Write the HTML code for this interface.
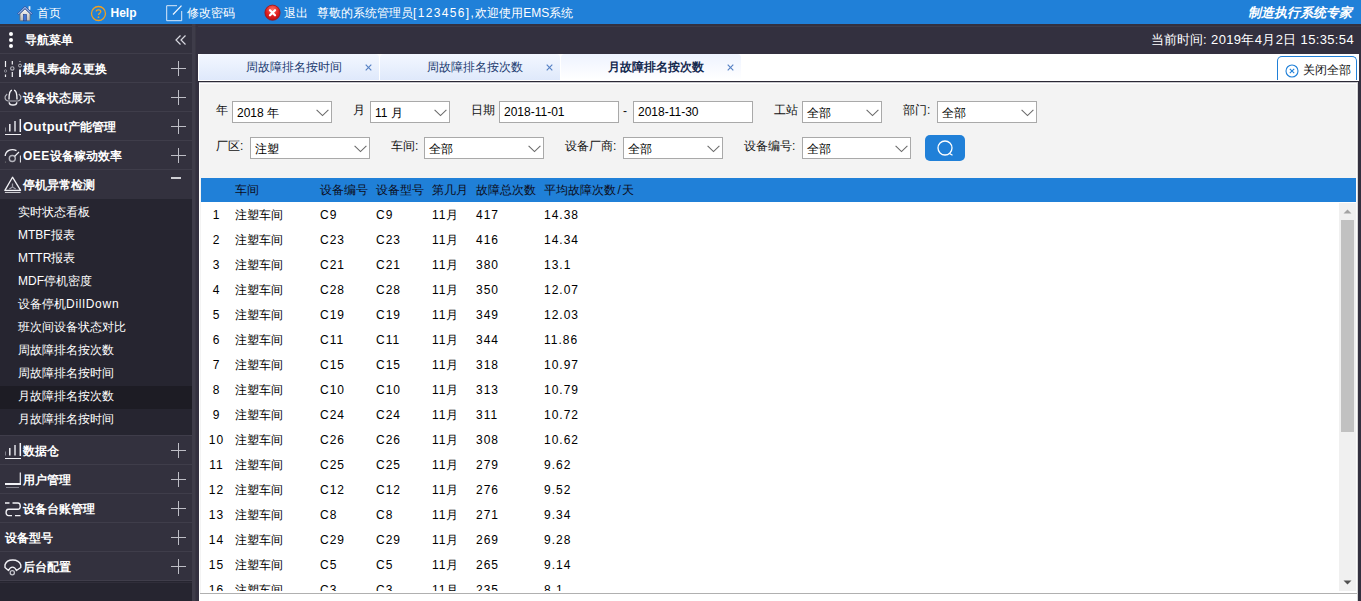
<!DOCTYPE html>
<html lang="zh"><head>
<meta charset="utf-8">
<title>EMS</title>
<style>
*{box-sizing:border-box;margin:0;padding:0}
html,body{width:1361px;height:601px;overflow:hidden;background:#33303f;font-family:"Liberation Sans",sans-serif;font-size:12px;color:#000}
.abs{position:absolute}
span,div{white-space:nowrap}
#top{position:absolute;left:0;top:0;width:1361px;height:24px;background:#2080d8;color:#fff}
#top .t{position:absolute;top:5px;line-height:16px;font-size:12px}
#bar2{position:absolute;left:198px;top:24px;width:1163px;height:30px;background:#33303f;color:#fff}
#side{position:absolute;left:0;top:24px;width:193px;height:577px;background:#262530;color:#fff;overflow:hidden}
#split{position:absolute;left:192px;top:24px;width:4px;height:577px;background:#3e3c49;border-right:1px solid #383642}
.mi{position:absolute;left:0;width:193px;height:28px;background:#33313e;font-weight:bold;font-size:12px}
.mi .lb{position:absolute;top:7px;line-height:16px}
.mi .pl{position:absolute;left:171px;top:7px;width:15px;height:15px}
.mi .pl:before{content:"";position:absolute;left:0;top:7px;width:15px;height:1px;background:#bebec6}
.mi .pl:after{content:"";position:absolute;left:7px;top:0;width:1px;height:15px;background:#bebec6}
.sep{position:absolute;left:0;width:193px;height:1px;background:#3f3d4a}
.si{position:absolute;left:0;width:193px;height:23px;font-size:12px}
.si>span{position:absolute;left:18px;top:2px;line-height:16px}
.si.on{background:#1d1c24}
#tabs{position:absolute;left:198px;top:54px;width:1161px;height:27px;background:#fff}
.tab{position:absolute;top:0;height:26px;width:180px;border-radius:4px 4px 0 0;background:linear-gradient(#f3f7ff,#dfe9fb);color:#1c3b70;font-size:12px}
.tab .tx{position:absolute;left:47px;top:5px;line-height:16px}
.tab .x{position:absolute;left:165px;top:9px;width:9px;height:9px}
.tab.on{background:linear-gradient(#eef3ff,#ffffff);font-weight:bold;color:#15294f}
#tline{position:absolute;left:198px;top:81px;width:1161px;height:1px;background:#2b2936}
#panel{position:absolute;left:200px;top:82px;width:1158px;height:519px;background:#f3f3f3;border-right:1px solid #d5d5d5}
#pl{position:absolute;left:199px;top:82px;width:1px;height:519px;background:#fff}
#pt{position:absolute;left:-1px;top:0;width:1158px;height:2px;background:#fff;border-top:1px solid #c9c9ce}
#pr{position:absolute;left:1156px;top:1px;width:1px;height:518px;background:#fcfcfc}
.lab{position:absolute;font-size:12px;line-height:16px;color:#111}
.sel{position:absolute;height:22px;border:1px solid #a9a9a9;background:#fff;font-size:12px;line-height:20px;padding-left:4px;padding-top:1px;color:#000}
.sel.inp{padding-top:0}
.sel svg{position:absolute;right:2px;top:7px}
#btn{position:absolute;left:725px;top:53px;width:40px;height:26px;border-radius:5px;background:#2080d8}
#th{position:absolute;left:1px;top:96px;width:1155px;height:24px;background:#2080d8;color:#0c0c18;font-size:12px}
#th>span{position:absolute;top:4px;line-height:16px}
#tbg{position:absolute;left:1px;top:120px;width:1155px;height:391px;background:#fff}
#tb{position:absolute;left:1px;top:120px;width:1155px;height:389px;background:#fff;overflow:hidden}
#tbot{position:absolute;left:0;top:511px;width:1157px;height:8px;background:#fff;border-top:1px solid #b0b0b0}
.tr{position:absolute;left:0;width:1138px;height:25px;font-size:12px;color:#000}
.tr span{position:absolute;top:5px;line-height:16px}
.c0{left:0;width:31px;text-align:center}
.c0,.c2,.c3,.c4,.c5,.c6{letter-spacing:1px}
.ls{letter-spacing:.45px;font-size:13px}
.c1{left:34px}.c2{left:119px}.c3{left:175px}.c4{left:231px}.c5{left:275px}.c6{left:343px}
#sb{position:absolute;left:1138px;top:1px;width:17px;height:389px;background:#f0f0f0}
#thumb{position:absolute;left:2px;top:17px;width:13px;height:212px;background:#c1c1c1}
.j{display:inline-block;text-align:justify;text-align-last:justify}
</style>
</head>
<body>
<div id="top">
  <svg class="abs" style="left:17px;top:5px" width="16" height="17" viewBox="0 0 16 17"><defs><linearGradient id="hw" x1="0" y1="0" x2="0" y2="1"><stop offset="0" stop-color="#fafafa"></stop><stop offset="1" stop-color="#b8b8b8"></stop></linearGradient></defs><rect x="11.6" y="1.2" width="1.8" height="3.6" fill="#eee"></rect><path d="M3 8.5 L8 3.8 L13 8.5 V15.8 H3 Z" fill="url(#hw)" stroke="#6e6e6e" stroke-width="0.8"></path><path d="M8 1.2 L15.4 8.6 L14.2 9.6 L8 3.6 L1.8 9.6 L0.6 8.6 Z" fill="#9fbcee" stroke="#2d4f9c" stroke-width="0.9"></path><rect x="6.5" y="9.5" width="3" height="6.3" fill="#3f74d6" stroke="#213f86" stroke-width="0.6"></rect></svg>
  <span class="t j" style="left: 37px; width: 24px;">首页</span>
  <svg class="abs" style="left:90px;top:5px" width="17" height="17" viewBox="0 0 17 17"><circle cx="8.5" cy="8.5" r="7" fill="none" stroke="#f0a020" stroke-width="1.3"></circle><path d="M6.2 6.6 C6.2 4.2 10.8 4.2 10.8 6.6 C10.8 8.2 8.5 8.2 8.5 10" fill="none" stroke="#f0a020" stroke-width="1.3"></path><circle cx="8.5" cy="12.2" r="0.9" fill="#f0a020"></circle></svg>
  <span class="t" style="left:110.5px;font-weight:bold">Help</span>
  <svg class="abs" style="left:166px;top:5px" width="17" height="17" viewBox="0 0 17 17"><path d="M11 0.7 H0.7 V15.7 H15.7 V6" fill="none" stroke="#dbe9f9" stroke-width="1"></path><path d="M7 9.5 L15.5 0.6" fill="none" stroke="#f4f8ff" stroke-width="1.2"></path></svg>
  <span class="t j" style="left: 187px; width: 48px;">修改密码</span>
  <svg class="abs" style="left:264px;top:4px" width="17" height="17" viewBox="0 0 17 17"><defs><radialGradient id="rx" cx="0.5" cy="0.3" r="0.75"><stop offset="0" stop-color="#ff7466"></stop><stop offset="0.55" stop-color="#e02020"></stop><stop offset="1" stop-color="#b00c10"></stop></radialGradient></defs><circle cx="8.5" cy="8.7" r="7.6" fill="url(#rx)" stroke="#9a1418" stroke-width="0.8"></circle><path d="M6 6.2 L11 11.2 M11 6.2 L6 11.2" stroke="#fff" stroke-width="2.3" stroke-linecap="round"></path></svg>
  <span class="t j" style="left: 284px; width: 24px;">退出</span>
  <span class="t j" style="left: 317px; width: 256.22px;">尊敬的系统管理员<span style="letter-spacing:1.35px">[123456],</span>欢迎使用EMS系统</span>
  <span class="t j" style="right: 9px; font-weight: bold; font-style: italic; font-size: 13px; width: 104px;">制造执行系统专家</span>
</div>
<div id="bar2"><i class="abs" style="left:0;top:2px;width:1163px;height:1px;background:#3d3b48"></i><span class="abs j" style="left: 953px; top: 8px; line-height: 16px; font-size: 13px; width: 55.63px;">当前时间:</span><span class="abs j" style="right: 7px; top: 8px; line-height: 16px; font-size: 13px; letter-spacing: 0.35px; width: 142.91px;">2019年4月2日 15:35:54</span></div>

<div id="side">
  <div class="sep" style="top:0;height:2px;background:#33313e"></div>
  <div class="sep" style="top:2px"></div>
  <div class="mi" style="top:3px;height:26px">
    <svg class="abs" style="left:8px;top:4px" width="6" height="18" viewBox="0 0 6 18"><circle cx="3" cy="3" r="2" fill="#fff"></circle><circle cx="3" cy="9" r="2" fill="#fff"></circle><circle cx="3" cy="15" r="2" fill="#fff"></circle></svg>
    <span class="lb j" style="left: 25px; top: 5px; width: 48px;">导航菜单</span>
    <svg class="abs" style="left:175px;top:8px" width="12" height="10" viewBox="0 0 12 10"><path d="M5.5 0.5 L1 5 L5.5 9.5 M10.5 0.5 L6 5 L10.5 9.5" fill="none" stroke="#d8d8e0" stroke-width="1.2"></path></svg>
  </div>
  <div class="sep" style="top:29px"></div>
  <div class="mi" style="top:30px">
    <svg class="abs" style="left:4px;top:7px" width="19" height="17" viewBox="0 0 19 17"><path d="M1.5 0 V6 M1.5 13.5 V16 M8.3 0 V3.5 M8.3 11 V16 M16 0 V0.8" stroke="#f2f2f6" stroke-width="1.2" fill="none"></path><path d="M16 8.5 V16" stroke="#f2f2f6" stroke-width="2" fill="none"></path><circle cx="1.5" cy="10" r="1.2" fill="none" stroke="#8c8c96" stroke-width="0.9"></circle><circle cx="8.3" cy="7.4" r="1.7" fill="none" stroke="#b4b4bc" stroke-width="1.1"></circle><circle cx="16" cy="4.6" r="1.5" fill="none" stroke="#b4b4bc" stroke-width="1"></circle></svg>
    <span class="lb j" style="left: 23px; width: 84px;">模具寿命及更换</span><i class="pl"></i></div>
  <div class="sep" style="top:58px"></div>
  <div class="mi" style="top:59px">
    <svg class="abs" style="left:4px;top:6px" width="19" height="18" viewBox="0 0 19 18"><path d="M5 10.5 C5 4 6.5 1.2 8 1.2 M13 10.5 C13 4 11.5 1.2 10 1.2" fill="none" stroke="#f2f2f6" stroke-width="1.4"></path><path d="M3.2 5 C0.2 7.5 0.2 11 4 12 H14 C17.8 11 17.8 7.5 14.8 5" fill="none" stroke="#b4b4bc" stroke-width="1.1"></path><path d="M5.2 13.2 C5.2 17 12.8 17 12.8 13.2" fill="none" stroke="#f2f2f6" stroke-width="1.4"></path></svg>
    <span class="lb j" style="left: 23px; width: 72px;">设备状态展示</span><i class="pl"></i></div>
  <div class="sep" style="top:87px"></div>
  <div class="mi" style="top:88px">
    <svg class="abs" style="left:4px;top:6px" width="19" height="18" viewBox="0 0 19 18"><path d="M1.5 9.5 V13.5" stroke="#80808a" stroke-width="1"></path><path d="M5.8 6 V13.5" stroke="#f2f2f6" stroke-width="1.5"></path><path d="M11 3 V13.5" stroke="#b4b4bc" stroke-width="2"></path><path d="M16.3 1 V14" stroke="#f2f2f6" stroke-width="1.5"></path><path d="M1 16.5 H17" stroke="#f2f2f6" stroke-width="1"></path></svg>
    <span class="lb j" style="left: 23px; width: 93.3px;"><span class="ls">Output</span>产能管理</span><i class="pl"></i></div>
  <div class="sep" style="top:116px"></div>
  <div class="mi" style="top:117px">
    <svg class="abs" style="left:4px;top:6px" width="19" height="18" viewBox="0 0 19 18"><path d="M1.2 9 C1.5 4 7 1 12.5 3.6" fill="none" stroke="#f2f2f6" stroke-width="1.3"></path><circle cx="8.3" cy="11.5" r="3" fill="none" stroke="#b4b4bc" stroke-width="1.4"></circle><path d="M10.6 9.4 L15 5" stroke="#f2f2f6" stroke-width="1.3"></path><path d="M16.4 8.5 V15.5" stroke="#f2f2f6" stroke-width="1"></path><circle cx="1.5" cy="15" r="0.6" fill="#888"></circle></svg>
    <span class="lb j" style="left: 23px; width: 98.84px;"><span style="letter-spacing:.5px">OEE</span>设备稼动效率</span><i class="pl"></i></div>
  <div class="sep" style="top:145px"></div>
  <div class="mi" style="top:146px;height:29px">
    <svg class="abs" style="left:4px;top:5px" width="19" height="19" viewBox="0 0 19 19"><path d="M8.5 2.2 L16.6 15.4 H0.9 Z" fill="none" stroke="#f2f2f6" stroke-width="1.3" stroke-linejoin="round"></path><path d="M8.5 8.5 V12 M8.5 12 L5.3 14 M8.5 12 L11.7 14" stroke="#9c9ca6" stroke-width="1.3" fill="none"></path><path d="M0.9 17.4 H16.6" stroke="#f2f2f6" stroke-width="0.9"></path></svg>
    <span class="lb j" style="left: 23px; width: 72px;">停机异常检测</span>
    <i class="abs" style="left:171px;top:7px;width:10px;height:2px;background:#cfcfd4"></i></div>
  <div class="si" style="top:178px"><span class="j" style="width: 72px;">实时状态看板</span></div>
  <div class="si" style="top:201px"><span class="j" style="width: 56.67px;">MTBF报表</span></div>
  <div class="si" style="top:224px"><span class="j" style="width: 57.33px;">MTTR报表</span></div>
  <div class="si" style="top:247px"><span class="j" style="width: 74px;">MDF停机密度</span></div>
  <div class="si" style="top:270px"><span class="j" style="width: 101.34px;">设备停机<span style="letter-spacing:.75px">DillDown</span></span></div>
  <div class="si" style="top:293px"><span class="j" style="width: 108px;">班次间设备状态对比</span></div>
  <div class="si" style="top:316px"><span class="j" style="width: 96px;">周故障排名按次数</span></div>
  <div class="si" style="top:339px"><span class="j" style="width: 96px;">周故障排名按时间</span></div>
  <div class="si on" style="top:362px"><span class="j" style="width: 96px;">月故障排名按次数</span></div>
  <div class="si" style="top:385px"><span class="j" style="width: 96px;">月故障排名按时间</span></div>
  <div class="sep" style="top:411px"></div>
  <div class="mi" style="top:412px">
    <svg class="abs" style="left:4px;top:6px" width="19" height="18" viewBox="0 0 19 18"><path d="M1.5 9.5 V13.5" stroke="#80808a" stroke-width="1"></path><path d="M5.8 6 V13.5" stroke="#f2f2f6" stroke-width="1.5"></path><path d="M11 3 V13.5" stroke="#b4b4bc" stroke-width="2"></path><path d="M16.3 1 V14" stroke="#f2f2f6" stroke-width="1.5"></path><path d="M1 16.5 H17" stroke="#f2f2f6" stroke-width="1"></path></svg>
    <span class="lb j" style="left: 23px; width: 36px;">数据仓</span><i class="pl"></i></div>
  <div class="sep" style="top:440px"></div>
  <div class="mi" style="top:441px">
    <svg class="abs" style="left:4px;top:6px" width="19" height="18" viewBox="0 0 19 18"><path d="M16.3 1.5 V13" stroke="#f2f2f6" stroke-width="1.2"></path><path d="M1 13 H17" stroke="#f2f2f6" stroke-width="2"></path><path d="M2 16.5 H15" stroke="#8c8c96" stroke-width="0.9"></path></svg>
    <span class="lb j" style="left: 23px; width: 48px;">用户管理</span><i class="pl"></i></div>
  <div class="sep" style="top:469px"></div>
  <div class="mi" style="top:470px">
    <svg class="abs" style="left:4px;top:7px" width="19" height="17" viewBox="0 0 19 17"><path d="M1 2 H5.5 M8.5 2 H14 C17 2 17 8.3 14 8.3 H4.5 C1.3 8.3 1.3 14.6 4.5 14.6 H8 M11 14.6 H16.5" fill="none" stroke="#f2f2f6" stroke-width="1.4"></path></svg>
    <span class="lb j" style="left: 23px; width: 72px;">设备台账管理</span><i class="pl"></i></div>
  <div class="sep" style="top:498px"></div>
  <div class="mi" style="top:499px">
    <span class="lb j" style="left: 5px; width: 48px;">设备型号</span><i class="pl"></i></div>
  <div class="sep" style="top:527px"></div>
  <div class="mi" style="top:528px">
    <svg class="abs" style="left:3.7px;top:6.5px" width="19" height="18" viewBox="0 0 19 18"><path d="M1 5.8 C3 -0.6 14.5 -0.6 16.8 6 V8.5 L12.5 11.5 C10.5 7 6.5 7 4.5 11.5 L1 8.5 Z" fill="none" stroke="#f2f2f6" stroke-width="1.4" stroke-linejoin="round"></path><circle cx="8.3" cy="13.8" r="2.1" fill="none" stroke="#c4c4cc" stroke-width="1.3"></circle></svg>
    <span class="lb j" style="left: 23px; width: 48px;">后台配置</span><i class="pl"></i></div>
  <div class="sep" style="top:556px"></div>
  <div class="sep" style="top:558px;background:#302e3a"></div>
</div>
<div id="split"></div>
<div id="tabs">
  <div class="tab" style="left:1px"><span class="tx j" style="width: 96px;">周故障排名按时间</span><svg class="x" viewBox="0 0 9 9"><path d="M1.7 1.7 L7.3 7.3 M7.3 1.7 L1.7 7.3" stroke="#5681c4" stroke-width="1.15"></path></svg></div>
  <div class="tab" style="left:182px"><span class="tx j" style="width: 96px;">周故障排名按次数</span><svg class="x" viewBox="0 0 9 9"><path d="M1.7 1.7 L7.3 7.3 M7.3 1.7 L1.7 7.3" stroke="#5681c4" stroke-width="1.15"></path></svg></div>
  <div class="tab on" style="left:363px"><span class="tx j" style="width: 96px;">月故障排名按次数</span><svg class="x" viewBox="0 0 9 9"><path d="M1.7 1.7 L7.3 7.3 M7.3 1.7 L1.7 7.3" stroke="#5681c4" stroke-width="1.15"></path></svg></div>
  <div class="abs" style="left:1079px;top:2px;width:80px;height:24px;border:1px solid #2080d8;border-bottom:none;border-radius:5px 5px 0 0;background:#fff">
    <svg class="abs" style="left:6.5px;top:6.5px" width="14" height="14" viewBox="0 0 14 14"><circle cx="7" cy="7" r="6" fill="none" stroke="#2080d8" stroke-width="1.1"></circle><path d="M4.8 4.8 L9.2 9.2 M9.2 4.8 L4.8 9.2" stroke="#2080d8" stroke-width="1.1"></path></svg>
    <span class="abs cl j" style="left: 25px; top: 4.5px; line-height: 16px; font-size: 12px; color: rgb(17, 17, 17); width: 48px;">关闭全部</span>
  </div>
</div>
<div id="tline"></div>
<div id="pl"></div>
<div id="panel"><div id="pt"></div><div id="pr"></div>
  <span class="lab j" style="left: 16px; top: 20px; width: 12px;">年</span>
  <div class="sel" style="left:32px;top:19px;width:100px"><span class="v j" style="width: 42.03px;">2018 年</span><svg width="13" height="8" viewBox="0 0 13 8"><path d="M0.6 0.8 L6.5 6.6 L12.4 0.8" fill="none" stroke="#6a6a6a" stroke-width="1.1"></path></svg></div>
  <span class="lab j" style="left: 153px; top: 20px; width: 12px;">月</span>
  <div class="sel" style="left:170px;top:19px;width:80px"><span class="v j" style="width: 27.8px;">11 月</span><svg width="13" height="8" viewBox="0 0 13 8"><path d="M0.6 0.8 L6.5 6.6 L12.4 0.8" fill="none" stroke="#6a6a6a" stroke-width="1.1"></path></svg></div>
  <span class="lab j" style="left: 271px; top: 20px; width: 24px;">日期</span>
  <div class="sel inp" style="left:299px;top:19px;width:120px"><span class="v">2018-11-01</span></div>
  <span class="lab" style="left:423px;top:21px">-</span>
  <div class="sel inp" style="left:433px;top:19px;width:120px"><span class="v">2018-11-30</span></div>
  <span class="lab j" style="left: 574px; top: 20px; width: 24px;">工站</span>
  <div class="sel" style="left:602px;top:19px;width:80px"><span class="v j" style="width: 24px;">全部</span><svg width="13" height="8" viewBox="0 0 13 8"><path d="M0.6 0.8 L6.5 6.6 L12.4 0.8" fill="none" stroke="#6a6a6a" stroke-width="1.1"></path></svg></div>
  <span class="lab j" style="left: 703px; top: 20px; width: 27.34px;">部门:</span>
  <div class="sel" style="left:737px;top:19px;width:100px"><span class="v j" style="width: 24px;">全部</span><svg width="13" height="8" viewBox="0 0 13 8"><path d="M0.6 0.8 L6.5 6.6 L12.4 0.8" fill="none" stroke="#6a6a6a" stroke-width="1.1"></path></svg></div>

  <span class="lab j" style="left: 16px; top: 56px; width: 27.34px;">厂区:</span>
  <div class="sel" style="left:50px;top:55px;width:120px"><span class="v j" style="width: 24px;">注塑</span><svg width="13" height="8" viewBox="0 0 13 8"><path d="M0.6 0.8 L6.5 6.6 L12.4 0.8" fill="none" stroke="#6a6a6a" stroke-width="1.1"></path></svg></div>
  <span class="lab j" style="left: 191px; top: 56px; width: 27.34px;">车间:</span>
  <div class="sel" style="left:224px;top:55px;width:120px"><span class="v j" style="width: 24px;">全部</span><svg width="13" height="8" viewBox="0 0 13 8"><path d="M0.6 0.8 L6.5 6.6 L12.4 0.8" fill="none" stroke="#6a6a6a" stroke-width="1.1"></path></svg></div>
  <span class="lab j" style="left: 365px; top: 56px; width: 51.34px;">设备厂商:</span>
  <div class="sel" style="left:423px;top:55px;width:100px"><span class="v j" style="width: 24px;">全部</span><svg width="13" height="8" viewBox="0 0 13 8"><path d="M0.6 0.8 L6.5 6.6 L12.4 0.8" fill="none" stroke="#6a6a6a" stroke-width="1.1"></path></svg></div>
  <span class="lab j" style="left: 544px; top: 56px; width: 51.34px;">设备编号:</span>
  <div class="sel" style="left:602px;top:55px;width:109px"><span class="v j" style="width: 24px;">全部</span><svg width="13" height="8" viewBox="0 0 13 8"><path d="M0.6 0.8 L6.5 6.6 L12.4 0.8" fill="none" stroke="#6a6a6a" stroke-width="1.1"></path></svg></div>
  <div id="btn"><svg class="abs" style="left:11px;top:4px" width="18" height="18" viewBox="0 0 18 18"><circle cx="9" cy="9" r="7" fill="none" stroke="#fff" stroke-width="1.3"></circle><path d="M13.5 14.5 L16.5 16.2" stroke="#fff" stroke-width="1.3"></path></svg></div>

  <div id="th"><span style="left: 34px; width: 24px;" class="j">车间</span><span style="left: 119px; width: 48px;" class="j">设备编号</span><span style="left: 175px; width: 48px;" class="j">设备型号</span><span style="left: 231px; width: 36px;" class="j">第几月</span><span style="left: 275px; width: 60px;" class="j">故障总次数</span><span style="left: 343px; width: 90.34px;" class="j">平均故障次数<span style="padding:0 1.5px">/</span>天</span></div>
  <div id="tbg"></div>
  <div id="tb">
    <div class="tr" style="top:0px"><span class="c0">1</span><span class="c1 j" style="width: 48px;">注塑车间</span><span class="c2">C9</span><span class="c3">C9</span><span class="c4 j" style="width: 27.47px;">11月</span><span class="c5">417</span><span class="c6">14.38</span></div>
    <div class="tr" style="top:25px"><span class="c0">2</span><span class="c1 j" style="width: 48px;">注塑车间</span><span class="c2">C23</span><span class="c3">C23</span><span class="c4 j" style="width: 27.47px;">11月</span><span class="c5">416</span><span class="c6">14.34</span></div>
    <div class="tr" style="top:50px"><span class="c0">3</span><span class="c1 j" style="width: 48px;">注塑车间</span><span class="c2">C21</span><span class="c3">C21</span><span class="c4 j" style="width: 27.47px;">11月</span><span class="c5">380</span><span class="c6">13.1</span></div>
    <div class="tr" style="top:75px"><span class="c0">4</span><span class="c1 j" style="width: 48px;">注塑车间</span><span class="c2">C28</span><span class="c3">C28</span><span class="c4 j" style="width: 27.47px;">11月</span><span class="c5">350</span><span class="c6">12.07</span></div>
    <div class="tr" style="top:100px"><span class="c0">5</span><span class="c1 j" style="width: 48px;">注塑车间</span><span class="c2">C19</span><span class="c3">C19</span><span class="c4 j" style="width: 27.47px;">11月</span><span class="c5">349</span><span class="c6">12.03</span></div>
    <div class="tr" style="top:125px"><span class="c0">6</span><span class="c1 j" style="width: 48px;">注塑车间</span><span class="c2">C11</span><span class="c3">C11</span><span class="c4 j" style="width: 27.47px;">11月</span><span class="c5">344</span><span class="c6">11.86</span></div>
    <div class="tr" style="top:150px"><span class="c0">7</span><span class="c1 j" style="width: 48px;">注塑车间</span><span class="c2">C15</span><span class="c3">C15</span><span class="c4 j" style="width: 27.47px;">11月</span><span class="c5">318</span><span class="c6">10.97</span></div>
    <div class="tr" style="top:175px"><span class="c0">8</span><span class="c1 j" style="width: 48px;">注塑车间</span><span class="c2">C10</span><span class="c3">C10</span><span class="c4 j" style="width: 27.47px;">11月</span><span class="c5">313</span><span class="c6">10.79</span></div>
    <div class="tr" style="top:200px"><span class="c0">9</span><span class="c1 j" style="width: 48px;">注塑车间</span><span class="c2">C24</span><span class="c3">C24</span><span class="c4 j" style="width: 27.47px;">11月</span><span class="c5">311</span><span class="c6">10.72</span></div>
    <div class="tr" style="top:225px"><span class="c0">10</span><span class="c1 j" style="width: 48px;">注塑车间</span><span class="c2">C26</span><span class="c3">C26</span><span class="c4 j" style="width: 27.47px;">11月</span><span class="c5">308</span><span class="c6">10.62</span></div>
    <div class="tr" style="top:250px"><span class="c0">11</span><span class="c1 j" style="width: 48px;">注塑车间</span><span class="c2">C25</span><span class="c3">C25</span><span class="c4 j" style="width: 27.47px;">11月</span><span class="c5">279</span><span class="c6">9.62</span></div>
    <div class="tr" style="top:275px"><span class="c0">12</span><span class="c1 j" style="width: 48px;">注塑车间</span><span class="c2">C12</span><span class="c3">C12</span><span class="c4 j" style="width: 27.47px;">11月</span><span class="c5">276</span><span class="c6">9.52</span></div>
    <div class="tr" style="top:300px"><span class="c0">13</span><span class="c1 j" style="width: 48px;">注塑车间</span><span class="c2">C8</span><span class="c3">C8</span><span class="c4 j" style="width: 27.47px;">11月</span><span class="c5">271</span><span class="c6">9.34</span></div>
    <div class="tr" style="top:325px"><span class="c0">14</span><span class="c1 j" style="width: 48px;">注塑车间</span><span class="c2">C29</span><span class="c3">C29</span><span class="c4 j" style="width: 27.47px;">11月</span><span class="c5">269</span><span class="c6">9.28</span></div>
    <div class="tr" style="top:350px"><span class="c0">15</span><span class="c1 j" style="width: 48px;">注塑车间</span><span class="c2">C5</span><span class="c3">C5</span><span class="c4 j" style="width: 27.47px;">11月</span><span class="c5">265</span><span class="c6">9.14</span></div>
    <div class="tr" style="top:375px"><span class="c0">16</span><span class="c1 j" style="width: 48px;">注塑车间</span><span class="c2">C3</span><span class="c3">C3</span><span class="c4 j" style="width: 27.47px;">11月</span><span class="c5">235</span><span class="c6">8.1</span></div>
    <div id="sb"><div id="thumb"></div>
      <svg class="abs" style="left:4px;top:6px" width="9" height="5" viewBox="0 0 9 5"><path d="M0.5 4.5 L4.5 0.5 L8.5 4.5 Z" fill="#a3a3a3"></path></svg>
      <svg class="abs" style="left:4px;top:377px" width="9" height="5" viewBox="0 0 9 5"><path d="M0.5 0.5 L4.5 4.5 L8.5 0.5 Z" fill="#505050"></path></svg>
    </div>
  </div>
  <div id="tbot"></div>
</div>


</body></html>
